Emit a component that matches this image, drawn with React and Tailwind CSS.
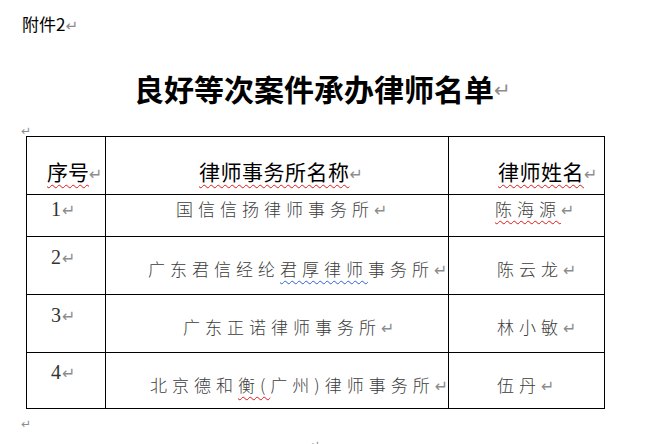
const cjk = { fontFamily: '"Noto Sans CJK SC", "Noto Sans", sans-serif' };

function Mark({ className = "text-[16px]" }) {
  return (
    <span
      className={"leading-none text-[#8c8c8c] font-['DejaVu_Sans'] font-normal tracking-normal no-underline " + className}
    >
      ↵
    </span>
  );
}

const rows = [
  { no: "1", firm: "国信信扬律师事务所", name: "陈海源", h: "h-[42px]", numPt: "pt-[2px]", pt: "pt-[2px]", firmPl: "pl-[70px]", namePl: "pl-[46px]" },
  { no: "2", firm: "广东君信经纶君厚律师事务所", name: "陈云龙", h: "h-[58px]", numPt: "pt-[8px]", pt: "pt-[20px]", firmPl: "pl-[42px]", namePl: "pl-[48px]" },
  { no: "3", firm: "广东正诺律师事务所", name: "林小敏", h: "h-[58px]", numPt: "pt-[8px]", pt: "pt-[20px]", firmPl: "pl-[77px]", namePl: "pl-[48px]" },
  { no: "4", firm: "北京德和衡(广州)律师事务所", name: "伍丹", h: "h-[56px]", numPt: "pt-[7px]", pt: "pt-[20px]", firmPl: "pl-[44px]", namePl: "pl-[48px]" },
];

const wavyRed = "underline decoration-wavy decoration-[#e01818] decoration-1 underline-offset-[4px]";
const wavyBlue = "underline decoration-wavy decoration-[#2f5fd0] decoration-1 underline-offset-[4px]";

function FirmText({ text }) {
  // grammar / spelling marks as Word shows them
  if (text.includes("君厚律师")) {
    const i = text.indexOf("君厚律师");
    return (
      <>
        {text.slice(0, i)}
        <span className={wavyBlue}>君厚律师</span>
        {text.slice(i + 4)}
      </>
    );
  }
  if (text.includes("衡(")) {
    const i = text.indexOf("衡(");
    return (
      <>
        {text.slice(0, i)}
        <span className={wavyRed}>衡(</span>
        {text.slice(i + 2)}
      </>
    );
  }
  return text;
}

export default function App() {
  return (
    <div className="w-[649px] h-[444px] bg-white overflow-hidden" style={cjk}>
      {/* heading line */}
      <div className="h-[60px] pt-[12px] pl-[22px]">
        <span className="text-[17px] leading-[22px] text-black">附件2</span>
        <Mark className="text-[15px]" />
      </div>

      {/* title */}
      <div className="h-[60px] pt-[8px] pl-[134px]">
        <span className="text-[30px] leading-[40px] font-bold text-black">良好等次案件承办律师名单</span>
        <Mark className="text-[20px] relative -top-[4px]" />
      </div>

      <div className="h-[16px] pl-[21px] leading-[12px] pt-[2px]">
        <Mark className="text-[12px]" />
      </div>

      {/* table */}
      <div className="ml-[26px] w-[579px] border-t border-l border-black flex flex-col">
        <div className="flex h-[58px]">
          <div className="w-[79px] border-r border-b border-black pt-[20px] pl-[20px] text-[21px] leading-[28px] text-black">
            <span className={wavyRed}>序号</span>
            <Mark />
          </div>
          <div className="w-[343px] border-r border-b border-black pt-[20px] pl-[93px] text-[21px] leading-[28px] text-black tracking-[0.5px]">
            <span className={wavyRed}>律师事务所名称</span>
            <Mark />
          </div>
          <div className="w-[156px] border-r border-b border-black pt-[20px] pl-[49px] text-[21px] leading-[28px] text-black tracking-[0.5px]">
            <span className={wavyRed}>律师姓名</span>
            <Mark />
          </div>
        </div>

        {rows.map((r) => (
          <div key={r.no} className={"flex " + r.h}>
            <div className={"w-[79px] border-r border-b border-black pl-[24px] " + r.numPt}>
              <span className="font-['Liberation_Serif'] text-[20px] leading-[22px] text-[#333]">{r.no}</span>
              <Mark className="text-[16px] ml-[1px]" />
            </div>
            <div className={"w-[343px] border-r border-b border-black overflow-hidden whitespace-nowrap " + r.pt + " " + r.firmPl}>
              <span className="text-[17px] leading-[22px] tracking-[5px] font-light text-[#3c3c3c]">
                <FirmText text={r.firm} />
              </span>
              <Mark />
            </div>
            <div className={"w-[156px] border-r border-b border-black " + r.pt + " " + r.namePl}>
              <span
                className={
                  "text-[17px] leading-[22px] tracking-[5px] font-light text-[#3c3c3c] " +
                  (r.name === "陈海源" ? wavyRed : "")
                }
              >
                {r.name}
              </span>
              <Mark />
            </div>
          </div>
        ))}
      </div>

      <div className="pl-[21px] pt-[6px] leading-[12px]">
        <Mark className="text-[12px]" />
      </div>
      <div className="pl-[310px] pt-[6px] leading-[12px]">
        <Mark className="text-[12px]" />
      </div>
    </div>
  );
}
